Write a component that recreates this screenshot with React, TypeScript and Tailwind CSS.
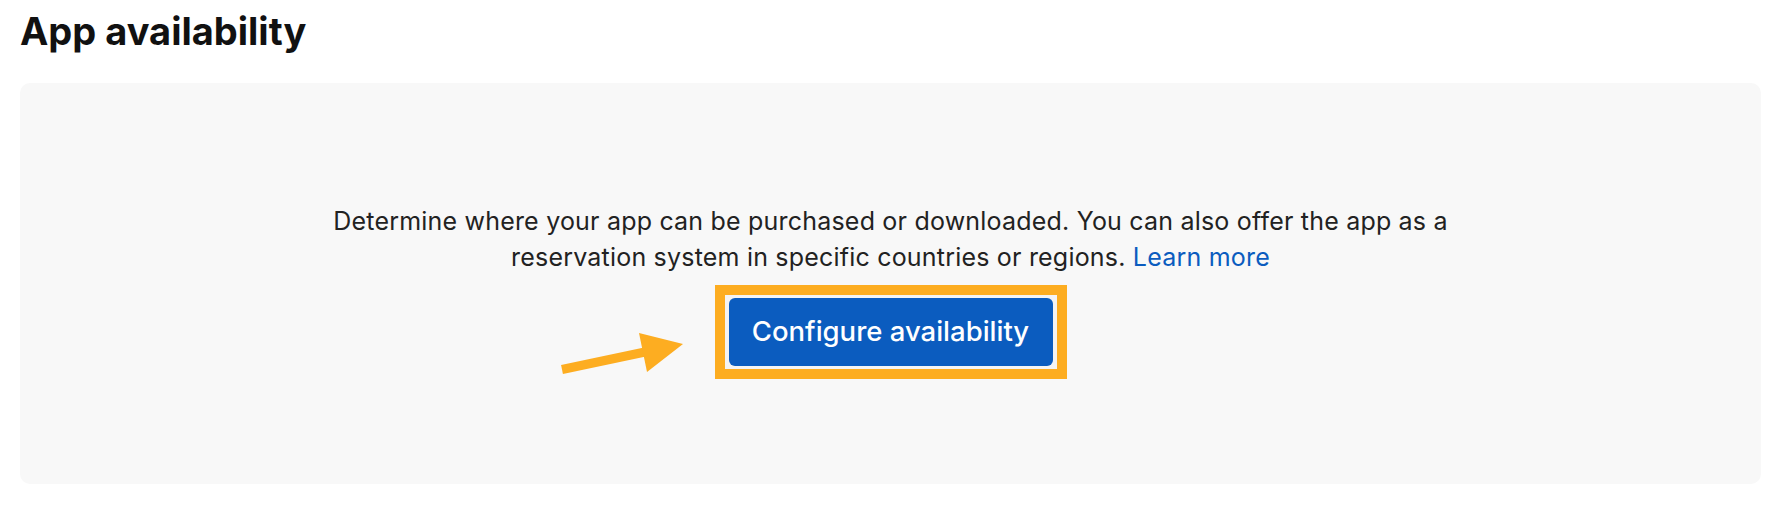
import React from "react";

export default function App() {
  return (
    <div className="w-[1784px] h-[516px] bg-white font-['Inter',sans-serif] text-[#111111] overflow-hidden">
      <h1 className="ml-[20px] pt-[12px] text-[38px] font-bold leading-none">
        App availability
      </h1>
      <div className="relative ml-[20px] mt-[33px] w-[1741px] h-[401px] rounded-[10px] bg-[#f8f8f8] flex flex-col items-center pt-[120px]">
        <p className="text-[25px] leading-[36px] tracking-[0.2px] text-center text-[#222222]">
          Determine where your app can be purchased or downloaded. You can also offer the app as a
          <br />
          reservation system in specific countries or regions.{" "}
          <a href="#" className="text-[#0b5cbf]">
            Learn more
          </a>
        </p>
        <div className="mt-[10px] border-[10px] border-[#fdad21] px-[4px] py-[3px] bg-[#f4f4f4]">
          <button className="w-[324px] h-[68px] rounded-[6px] bg-[#0b5cbf] text-white text-[27.5px] font-medium flex items-center justify-center">
            Configure availability
          </button>
        </div>
        <svg
          className="absolute left-[535px] top-[242px]"
          width="135"
          height="55"
          viewBox="0 0 135 55"
        >
          <line x1="7" y1="44.5" x2="90" y2="27" stroke="#fdad21" strokeWidth="9" />
          <polygon points="84,8 128,19 92,47" fill="#fdad21" />
        </svg>
      </div>
    </div>
  );
}
